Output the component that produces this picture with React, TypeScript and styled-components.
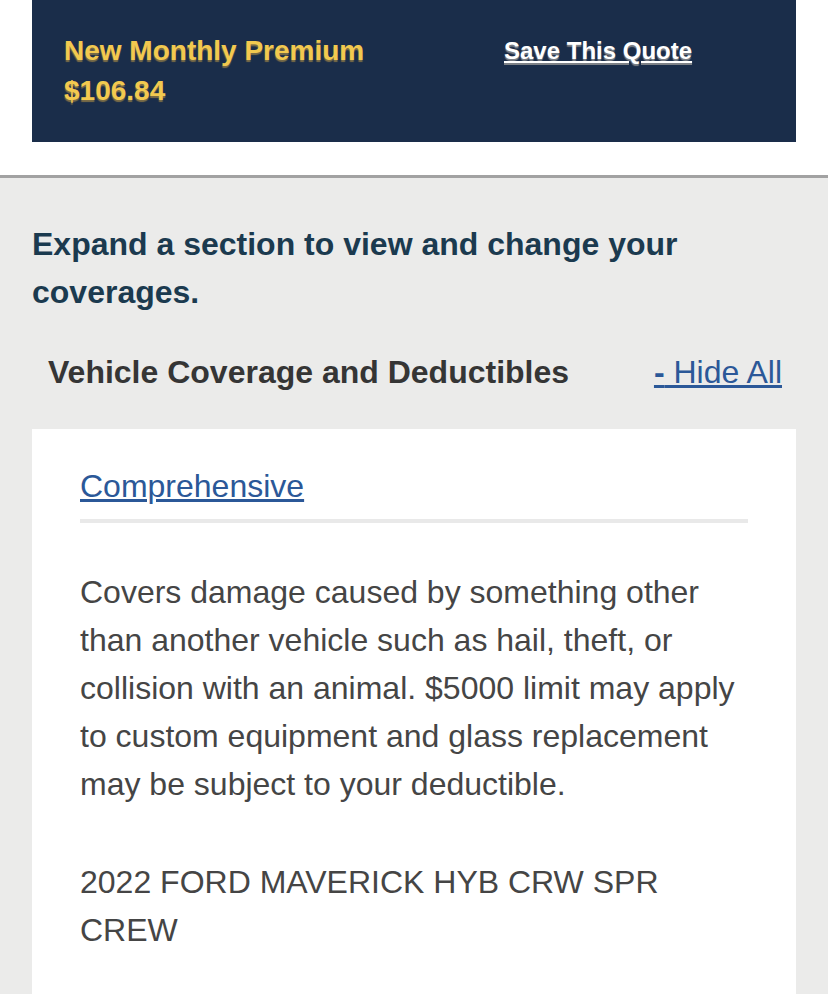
import React from 'react';
import styled, { createGlobalStyle } from 'styled-components';

const GlobalStyle = createGlobalStyle`
  html, body {
    margin: 0;
    padding: 0;
    background: #ffffff;
  }
  body {
    font-family: 'Liberation Sans', Arial, sans-serif;
  }
`;

const coverage = {
  name: 'Comprehensive',
  description:
    'Covers damage caused by something other than another vehicle such as hail, theft, or collision with an animal. $5000 limit may apply to custom equipment and glass replacement may be subject to your deductible.',
  vehicle: '2022 FORD MAVERICK HYB CRW SPR CREW',
};

function App() {
  return (
    <>
      <GlobalStyle />
      <Page>
        <TopArea>
          <PremiumBar>
            <Premium>
              <div>New Monthly Premium</div>
              <div>$106.84</div>
            </Premium>
            <SaveLink href="#">Save This Quote</SaveLink>
          </PremiumBar>
        </TopArea>
        <Coverages>
          <Intro>Expand a section to view and change your coverages.</Intro>
          <SectionRow>
            <SectionTitle>Vehicle Coverage and Deductibles</SectionTitle>
            <ToggleLink href="#">
              <Dash>-</Dash> Hide All
            </ToggleLink>
          </SectionRow>
          <Card>
            <CardHeader>
              <CoverageLink href="#">{coverage.name}</CoverageLink>
            </CardHeader>
            <Body>{coverage.description}</Body>
            <Body>{coverage.vehicle}</Body>
          </Card>
        </Coverages>
      </Page>
    </>
  );
}

export default App;

const Page = styled.div`
  width: 828px;
  min-height: 994px;
  display: flex;
  flex-direction: column;
  background: #ebebea;
`;

const TopArea = styled.div`
  background: #ffffff;
  padding: 0 32px 33px;
  border-bottom: 3px solid #a2a2a2;
`;

const PremiumBar = styled.div`
  background: #1a2d4a;
  padding: 31px 32px;
  display: grid;
  grid-template-columns: 440px 1fr;
  font-weight: 700;
  line-height: 40px;
`;

const Premium = styled.div`
  color: #f2c94f;
  font-size: 28px;
  text-shadow: 0 2px 1px rgba(140, 120, 70, 0.85);
`;

const SaveLink = styled.a`
  color: #ffffff;
  font-size: 24px;
  text-decoration: underline;
  text-underline-offset: 2px;
  text-shadow: 0 2px 1px rgba(150, 150, 150, 0.8);
`;

const Coverages = styled.div`
  flex: 1;
  display: flex;
  flex-direction: column;
  padding: 42px 32px 0;
`;

const Intro = styled.h2`
  margin: 0 0 32px;
  font-size: 32px;
  font-weight: 700;
  line-height: 48px;
  color: #1b3a4f;
`;

const SectionRow = styled.div`
  display: flex;
  justify-content: space-between;
  align-items: center;
  padding: 0 14px 0 16px;
  margin-bottom: 33px;
  line-height: 48px;
  font-size: 32px;
`;

const SectionTitle = styled.h3`
  margin: 0;
  font-size: 32px;
  font-weight: 700;
  color: #353535;
`;

const ToggleLink = styled.a`
  color: #2b5898;
  text-decoration: underline;
`;

const Dash = styled.span`
  font-weight: 700;
`;

const Card = styled.div`
  flex: 1;
  background: #ffffff;
  padding: 33px 48px 48px;
`;

const CardHeader = styled.div`
  padding-bottom: 3px;
  border-bottom: 4px solid #e9e9e9;
  line-height: 48px;
  margin-bottom: 45px;
`;

const CoverageLink = styled.a`
  font-size: 32px;
  color: #2b5898;
  text-decoration: underline;
`;

const Body = styled.p`
  margin: 0 0 50px;
  font-size: 32px;
  line-height: 48px;
  color: #454545;
`;
